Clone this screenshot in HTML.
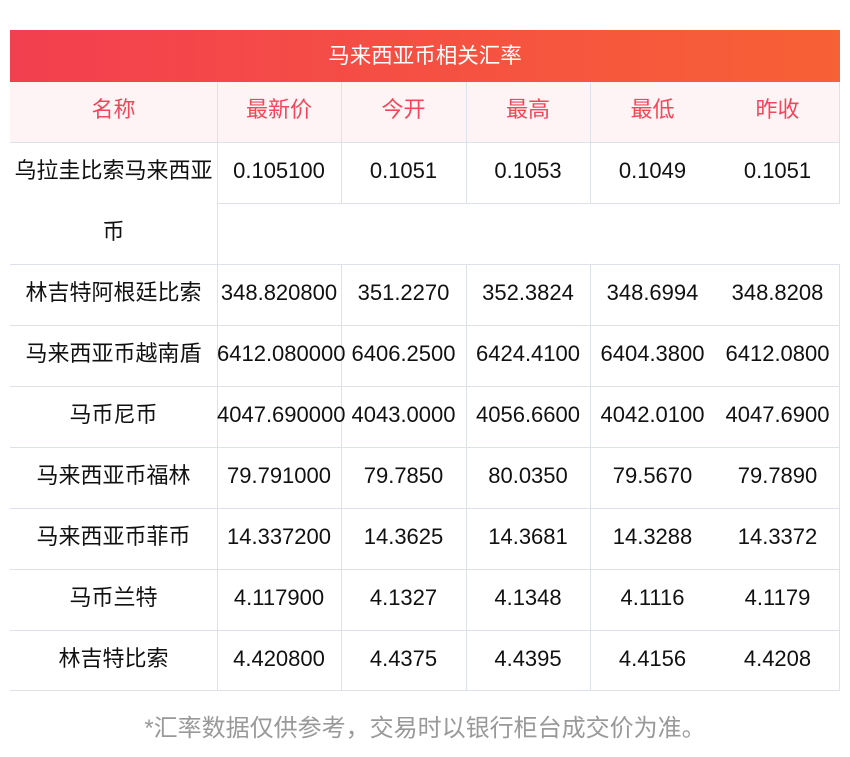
<!DOCTYPE html>
<html><head><meta charset="utf-8"><style>
body{margin:0;width:850px;height:757px;background:#fff;position:relative;overflow:hidden;font-family:"Liberation Sans","Noto Sans CJK SC",sans-serif}
.t{position:absolute;left:10px;top:30px;width:830px;height:52px;background:linear-gradient(90deg,#f33f50,#f76135);color:#fff;font-size:21.5px;line-height:52px;text-align:center}
.h{position:absolute;left:10px;top:82px;width:830px;height:60px;background:#fff4f5}
.c{position:absolute;text-align:center;font-size:22px;color:#111;line-height:61px;white-space:nowrap}
.hc{color:#f0485a;line-height:60px}
.vl{position:absolute;width:1px;background:#dde1ea}
.hl{position:absolute;height:1px;background:#dde1ea}
.f{position:absolute;left:0;width:850px;top:708px;text-align:center;color:#999;font-size:24px}
</style></head><body>
<div class="t">马来西亚币相关汇率</div>
<div class="h"></div>
<div class="hl" style="left:10px;top:142px;width:830px"></div>
<div class="hl" style="left:217px;top:203px;width:623px"></div>
<div class="hl" style="left:10px;top:264px;width:830px"></div>
<div class="hl" style="left:10px;top:325px;width:830px"></div>
<div class="hl" style="left:10px;top:386px;width:830px"></div>
<div class="hl" style="left:10px;top:447px;width:830px"></div>
<div class="hl" style="left:10px;top:508px;width:830px"></div>
<div class="hl" style="left:10px;top:569px;width:830px"></div>
<div class="hl" style="left:10px;top:630px;width:830px"></div>
<div class="hl" style="left:10px;top:690px;width:830px"></div>
<div class="vl" style="left:217px;top:82px;height:609px"></div>
<div class="vl" style="left:341px;top:82px;height:121px"></div>
<div class="vl" style="left:466px;top:82px;height:121px"></div>
<div class="vl" style="left:590px;top:82px;height:121px"></div>
<div class="vl" style="left:839px;top:82px;height:121px"></div>
<div class="vl" style="left:341px;top:264px;height:427px"></div>
<div class="vl" style="left:466px;top:264px;height:427px"></div>
<div class="vl" style="left:590px;top:264px;height:427px"></div>
<div class="vl" style="left:839px;top:264px;height:427px"></div>

<div class="c hc" style="left:10px;width:207px;top:80px">名称</div>
<div class="c hc" style="left:217px;width:124px;top:80px">最新价</div>
<div class="c hc" style="left:341px;width:125px;top:80px">今开</div>
<div class="c hc" style="left:466px;width:124px;top:80px">最高</div>
<div class="c hc" style="left:590px;width:125px;top:80px">最低</div>
<div class="c hc" style="left:715px;width:125px;top:80px">昨收</div>

<div class="c" style="left:10px;width:207px;top:140px">乌拉圭比索马来西亚</div>
<div class="c" style="left:10px;width:207px;top:201px">币</div>
<div class="c" style="left:217px;width:124px;top:140px">0.105100</div>
<div class="c" style="left:341px;width:125px;top:140px">0.1051</div>
<div class="c" style="left:466px;width:124px;top:140px">0.1053</div>
<div class="c" style="left:590px;width:125px;top:140px">0.1049</div>
<div class="c" style="left:715px;width:125px;top:140px">0.1051</div>

<div class="c" style="left:10px;width:207px;top:262px">林吉特阿根廷比索</div>
<div class="c" style="left:217px;width:124px;top:262px">348.820800</div>
<div class="c" style="left:341px;width:125px;top:262px">351.2270</div>
<div class="c" style="left:466px;width:124px;top:262px">352.3824</div>
<div class="c" style="left:590px;width:125px;top:262px">348.6994</div>
<div class="c" style="left:715px;width:125px;top:262px">348.8208</div>

<div class="c" style="left:10px;width:207px;top:323px">马来西亚币越南盾</div>
<div class="c" style="left:217px;width:124px;top:323px">6412.080000</div>
<div class="c" style="left:341px;width:125px;top:323px">6406.2500</div>
<div class="c" style="left:466px;width:124px;top:323px">6424.4100</div>
<div class="c" style="left:590px;width:125px;top:323px">6404.3800</div>
<div class="c" style="left:715px;width:125px;top:323px">6412.0800</div>

<div class="c" style="left:10px;width:207px;top:384px">马币尼币</div>
<div class="c" style="left:217px;width:124px;top:384px">4047.690000</div>
<div class="c" style="left:341px;width:125px;top:384px">4043.0000</div>
<div class="c" style="left:466px;width:124px;top:384px">4056.6600</div>
<div class="c" style="left:590px;width:125px;top:384px">4042.0100</div>
<div class="c" style="left:715px;width:125px;top:384px">4047.6900</div>

<div class="c" style="left:10px;width:207px;top:445px">马来西亚币福林</div>
<div class="c" style="left:217px;width:124px;top:445px">79.791000</div>
<div class="c" style="left:341px;width:125px;top:445px">79.7850</div>
<div class="c" style="left:466px;width:124px;top:445px">80.0350</div>
<div class="c" style="left:590px;width:125px;top:445px">79.5670</div>
<div class="c" style="left:715px;width:125px;top:445px">79.7890</div>

<div class="c" style="left:10px;width:207px;top:506px">马来西亚币菲币</div>
<div class="c" style="left:217px;width:124px;top:506px">14.337200</div>
<div class="c" style="left:341px;width:125px;top:506px">14.3625</div>
<div class="c" style="left:466px;width:124px;top:506px">14.3681</div>
<div class="c" style="left:590px;width:125px;top:506px">14.3288</div>
<div class="c" style="left:715px;width:125px;top:506px">14.3372</div>

<div class="c" style="left:10px;width:207px;top:567px">马币兰特</div>
<div class="c" style="left:217px;width:124px;top:567px">4.117900</div>
<div class="c" style="left:341px;width:125px;top:567px">4.1327</div>
<div class="c" style="left:466px;width:124px;top:567px">4.1348</div>
<div class="c" style="left:590px;width:125px;top:567px">4.1116</div>
<div class="c" style="left:715px;width:125px;top:567px">4.1179</div>

<div class="c" style="left:10px;width:207px;top:628px">林吉特比索</div>
<div class="c" style="left:217px;width:124px;top:628px">4.420800</div>
<div class="c" style="left:341px;width:125px;top:628px">4.4375</div>
<div class="c" style="left:466px;width:124px;top:628px">4.4395</div>
<div class="c" style="left:590px;width:125px;top:628px">4.4156</div>
<div class="c" style="left:715px;width:125px;top:628px">4.4208</div>

<div class="f">*汇率数据仅供参考，交易时以银行柜台成交价为准。</div>
</body></html>
